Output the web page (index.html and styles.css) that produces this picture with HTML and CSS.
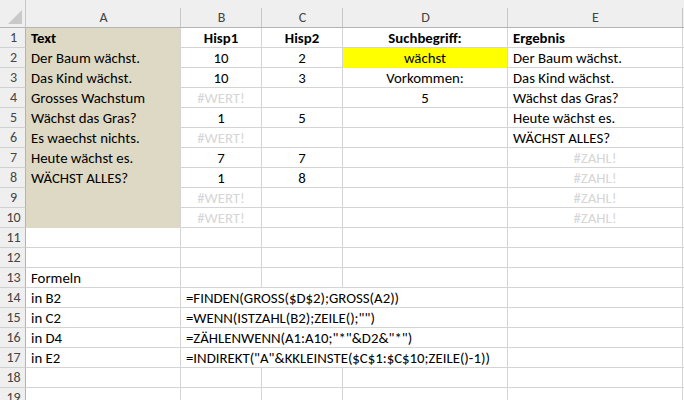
FILE: index.html
```html
<!DOCTYPE html>
<html>
<head>
<meta charset="utf-8">
<link rel="stylesheet" href="styles.css">
</head>
<body>
<div class="sheet">
  <div class="corner"><span class="tri"></span></div>
  <div class="ch">A</div><div class="ch">B</div><div class="ch">C</div><div class="ch">D</div><div class="ch">E</div><div class="ch last"></div>

  <div class="rh">1</div><div class="c fill b">Text</div><div class="c ctr b">Hisp1</div><div class="c ctr b">Hisp2</div><div class="c ctr b">Suchbegriff:</div><div class="c b">Ergebnis</div><div class="c"></div>
  <div class="rh">2</div><div class="c fill">Der Baum wächst.</div><div class="c ctr">10</div><div class="c ctr">2</div><div class="c ctr yellow">wächst</div><div class="c">Der Baum wächst.</div><div class="c"></div>
  <div class="rh">3</div><div class="c fill">Das Kind wächst.</div><div class="c ctr">10</div><div class="c ctr">3</div><div class="c ctr">Vorkommen:</div><div class="c">Das Kind wächst.</div><div class="c"></div>
  <div class="rh">4</div><div class="c fill">Grosses Wachstum</div><div class="c ctr err">#WERT!</div><div class="c"></div><div class="c ctr">5</div><div class="c">Wächst das Gras?</div><div class="c"></div>
  <div class="rh">5</div><div class="c fill">Wächst das Gras?</div><div class="c ctr">1</div><div class="c ctr">5</div><div class="c"></div><div class="c">Heute wächst es.</div><div class="c"></div>
  <div class="rh">6</div><div class="c fill">Es waechst nichts.</div><div class="c ctr err">#WERT!</div><div class="c"></div><div class="c"></div><div class="c">WÄCHST ALLES?</div><div class="c"></div>
  <div class="rh">7</div><div class="c fill">Heute wächst es.</div><div class="c ctr">7</div><div class="c ctr">7</div><div class="c"></div><div class="c ctr err">#ZAHL!</div><div class="c"></div>
  <div class="rh">8</div><div class="c fill">WÄCHST ALLES?</div><div class="c ctr">1</div><div class="c ctr">8</div><div class="c"></div><div class="c ctr err">#ZAHL!</div><div class="c"></div>
  <div class="rh">9</div><div class="c fill"></div><div class="c ctr err">#WERT!</div><div class="c"></div><div class="c"></div><div class="c ctr err">#ZAHL!</div><div class="c"></div>
  <div class="rh">10</div><div class="c fill"></div><div class="c ctr err">#WERT!</div><div class="c"></div><div class="c"></div><div class="c ctr err">#ZAHL!</div><div class="c"></div>
  <div class="rh">11</div><div class="c"></div><div class="c"></div><div class="c"></div><div class="c"></div><div class="c"></div><div class="c"></div>
  <div class="rh">12</div><div class="c"></div><div class="c"></div><div class="c"></div><div class="c"></div><div class="c"></div><div class="c"></div>
  <div class="rh">13</div><div class="c">Formeln</div><div class="c"></div><div class="c"></div><div class="c"></div><div class="c"></div><div class="c"></div>
  <div class="rh">14</div><div class="c">in B2</div><div class="c span3">=FINDEN(GROSS($D$2);GROSS(A2))</div><div class="c"></div><div class="c"></div>
  <div class="rh">15</div><div class="c">in C2</div><div class="c span3">=WENN(ISTZAHL(B2);ZEILE();"")</div><div class="c"></div><div class="c"></div>
  <div class="rh">16</div><div class="c">in D4</div><div class="c span3">=ZÄHLENWENN(A1:A10;"*"&amp;D2&amp;"*")</div><div class="c"></div><div class="c"></div>
  <div class="rh">17</div><div class="c">in E2</div><div class="c span3">=INDIREKT("A"&amp;KKLEINSTE($C$1:$C$10;ZEILE()-1))</div><div class="c"></div><div class="c"></div>
  <div class="rh">18</div><div class="c"></div><div class="c"></div><div class="c"></div><div class="c"></div><div class="c"></div><div class="c"></div>
  <div class="rh">19</div><div class="c"></div><div class="c"></div><div class="c"></div><div class="c"></div><div class="c"></div><div class="c"></div>
</div>
</body>
</html>
```

FILE: styles.css
```css
html, body {
  margin: 0;
  padding: 0;
  background: #ffffff;
  overflow: hidden;
}
.sheet {
  display: grid;
  grid-template-columns: 26px 155px 81px 81px 165px 175px 10px;
  grid-template-rows: 28px repeat(19, 20px);
  font-family: Carlito, Lato, "Liberation Sans", sans-serif;
  font-size: 14.8px;
  color: #000;
  width: 684px;
  height: 400px;
  overflow: hidden;
}
.corner {
  background: #efefef;
  border-right: 1px solid #c8c8c8;
  border-bottom: 1px solid #b4b4b4;
  position: relative;
}
.tri {
  position: absolute;
  right: 3px;
  bottom: 3px;
  width: 0;
  height: 0;
  border-left: 14px solid transparent;
  border-bottom: 14px solid #c9c9c9;
}
.ch {
  background: #efefef;
  border-bottom: 1px solid #b4b4b4;
  display: flex;
  align-items: flex-end;
  justify-content: center;
  padding-bottom: 1px;
  color: #444;
  font-size: 14px;
  background-image: linear-gradient(#c8c8c8, #c8c8c8);
  background-size: 1px 19px;
  background-position: right bottom;
  background-repeat: no-repeat;
}
.ch.last {
  background-image: none;
}
.rh {
  background: #efefef;
  border-right: 1px solid #b4b4b4;
  border-bottom: 1px solid #d0d0d0;
  color: #444;
  font-size: 14px;
  display: flex;
  align-items: center;
  justify-content: center;
  padding-left: 2px;
}
.c {
  border-right: 1px solid #d4d4d4;
  border-bottom: 1px solid #d4d4d4;
  padding: 0 5px;
  white-space: nowrap;
  display: flex;
  align-items: center;
  min-width: 0;
  padding-top: 1px;
}
.ctr {
  justify-content: center;
}
.b {
  font-weight: bold;
}
.fill {
  background: #ddd9c4;
  border-bottom-color: #ddd9c4;
}
.yellow {
  background: #ffff00;
  border-bottom-color: #ffff00;
}
.err {
  color: #d6d6d6;
}
.span3 {
  grid-column: span 3;
}
```
